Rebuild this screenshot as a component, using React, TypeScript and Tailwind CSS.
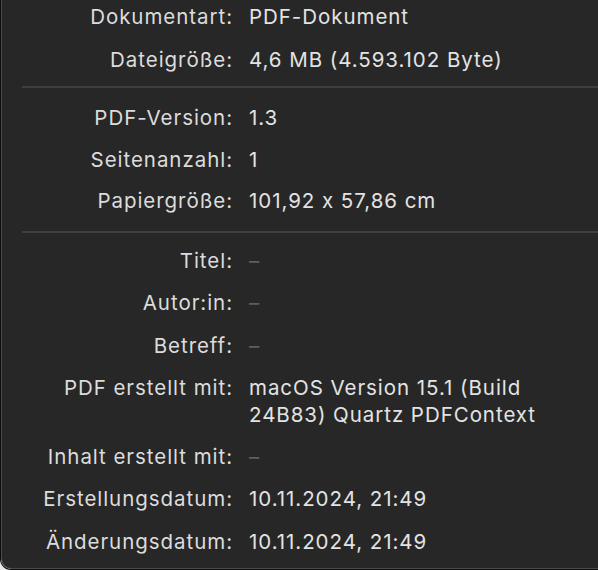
import React from "react";

type Row = { label: string; value: React.ReactNode; empty?: boolean };

function Section({ rows, className }: { rows: Row[]; className?: string }) {
  return (
    <div className={"grid grid-cols-[231px_1fr] gap-x-[16px] " + (className ?? "")}>
      {rows.map((r, i) => (
        <React.Fragment key={i}>
          <div className="text-right text-[#dcdcdc]">{r.label}</div>
          <div className={r.empty ? "text-[#5e5e5e]" : "text-[#e3e3e3]"}>{r.value}</div>
        </React.Fragment>
      ))}
    </div>
  );
}

export default function App() {
  return (
    <div className="w-[598px] h-[570px] bg-[#e9e9e9] overflow-hidden">
      <div className="h-[570px] border-l border-b border-[#0b0b0b] rounded-bl-[11px] overflow-hidden">
        <div
          className="h-full border-l border-b border-[#4c4c4c] rounded-bl-[10px] bg-[#272727] text-[20.5px] leading-[27px] tracking-[0.95px]"
          style={{ fontFamily: "Inter, 'Noto Sans', sans-serif", fontFeatureSettings: '"calt" 0' }}
        >
          <Section
            className="pt-[3px] gap-y-[16px]"
            rows={[
              { label: "Dokumentart:", value: "PDF-Dokument" },
              { label: "Dateigröße:", value: "4,6 MB (4.593.102 Byte)" },
            ]}
          />
          <div className="ml-[20px] mt-[13px] h-[2px] bg-[#3f3f3f]" />
          <Section
            className="mt-[16px] gap-y-[14.5px]"
            rows={[
              { label: "PDF-Version:", value: "1.3" },
              { label: "Seitenanzahl:", value: "1" },
              { label: "Papiergröße:", value: "101,92 x 57,86 cm" },
            ]}
          />
          <div className="ml-[20px] mt-[17px] h-[2px] bg-[#3f3f3f]" />
          <Section
            className="mt-[14px] gap-y-[15.3px]"
            rows={[
              { label: "Titel:", value: "–", empty: true },
              { label: "Autor:in:", value: "–", empty: true },
              { label: "Betreff:", value: "–", empty: true },
              {
                label: "PDF erstellt mit:",
                value: (
                  <>
                    macOS Version 15.1 (Build
                    <br />
                    24B83) Quartz PDFContext
                  </>
                ),
              },
              { label: "Inhalt erstellt mit:", value: "–", empty: true },
              { label: "Erstellungsdatum:", value: "10.11.2024, 21:49" },
              { label: "Änderungsdatum:", value: "10.11.2024, 21:49" },
            ]}
          />
        </div>
      </div>
    </div>
  );
}
